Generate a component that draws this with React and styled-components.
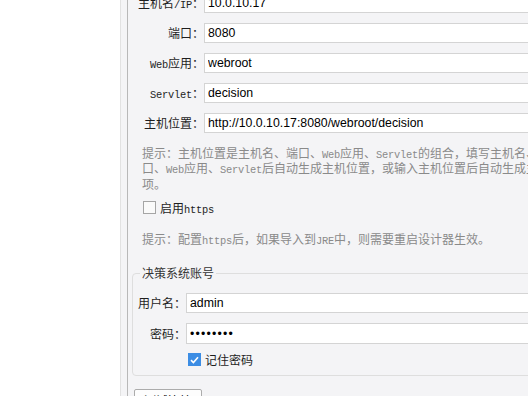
import styled, { createGlobalStyle } from "styled-components";

const GlobalStyle = createGlobalStyle`
  html, body {
    margin: 0;
    padding: 0;
    overflow: hidden;
    background: #fff;
  }
  body {
    font-family: "Noto Sans CJK SC", "Liberation Sans", sans-serif;
  }
`;

const Page = styled.div`
  display: flex;
  width: 528px;
  height: 396px;
  overflow: hidden;
`;

const Sidebar = styled.div`
  width: 120px;
  flex-shrink: 0;
  background: #fff;
  border-right: 1px solid #e2e2e2;
`;

const Gutter = styled.div`
  width: 6px;
  flex-shrink: 0;
  background: #f4f4f6;
`;

const Content = styled.div`
  flex: 1;
  min-width: 0;
  background: #f4f4f6;
  border-left: 1px solid #b8b8b8;
  overflow: hidden;
`;

// the form is scrolled a few pixels down, so the first row is cut off
const Scroll = styled.div`
  width: 640px;
  margin-top: -7px;
`;

const FieldGrid = styled.div`
  display: grid;
  grid-template-columns: ${(p) => p.$label}px 1fr;
  row-gap: 10px;
  align-items: center;
  padding-top: ${(p) => p.$top || 0}px;
`;

const Label = styled.label`
  text-align: right;
  font-size: 12px;
  line-height: 16px;
  color: #1e1e1e;
  white-space: nowrap;
`;

const Mono = styled.span`
  font-family: "Liberation Mono", monospace;
  font-size: 10.4px;
  line-height: 1;
  letter-spacing: -0.25px;
`;

const Input = styled.input`
  box-sizing: border-box;
  width: 100%;
  height: ${(p) => p.$h || 20}px;
  margin: 0;
  padding: 0 3px;
  border: 1px solid #d4d4d4;
  border-radius: 0;
  background: #fff;
  font-family: "Liberation Sans", Arial, sans-serif;
  font-size: 12.3px;
  color: #000;
  outline: none;
  letter-spacing: ${(p) => (p.type === "password" ? "1.2px" : "0")};
`;

const Hint = styled.div`
  margin: ${(p) => p.$top}px 0 0 14px;
  font-size: 12px;
  line-height: 15px;
  color: #8a8a8a;
  white-space: nowrap;
  word-spacing: ${(p) => p.$spread || 0}px;
`;

const CheckRow = styled.div`
  display: flex;
  align-items: center;
  gap: 4px;
  height: 17px;
  margin: ${(p) => p.$margin};
  font-size: 12px;
  line-height: 17px;
  color: #1e1e1e;
`;

const Box = styled.span`
  box-sizing: border-box;
  width: 13px;
  height: 13px;
  display: inline-flex;
  align-items: center;
  justify-content: center;
  border: 1px solid ${(p) => (p.$checked ? "#3c8de4" : "#a5a5a5")};
  background: ${(p) => (p.$checked ? "#3c8de4" : "#fafafa")};
`;

const Group = styled.fieldset`
  margin: 19px 0 0 4px;
  padding: 0 0 7px;
  min-width: 0;
  border: 1px solid #dedede;
  border-radius: 4px;
`;

const Legend = styled.legend`
  margin-left: 7px;
  padding: 0 2px;
  font-size: 12px;
  line-height: 16px;
  color: #333;
`;

const Button = styled.button`
  display: block;
  box-sizing: border-box;
  width: 68px;
  height: 22px;
  margin: 13px 0 0 6px;
  padding: 0;
  border: 1px solid #acacac;
  border-radius: 2px;
  background: #fdfdfd;
  font-family: "Noto Sans CJK SC", sans-serif;
  font-size: 12px;
  color: #000;
`;

const Check = ({ checked, children, margin }) => (
  <CheckRow $margin={margin}>
    <Box $checked={checked}>
      {checked && (
        <svg width="9" height="8" viewBox="0 0 9 8">
          <path d="M1 4.2 L3.4 6.5 L8 1.2" fill="none" stroke="#fff" strokeWidth="1.6" />
        </svg>
      )}
    </Box>
    <span>{children}</span>
  </CheckRow>
);

export default function App() {
  return (
    <>
      <GlobalStyle />
      <Page>
        <Sidebar />
        <Gutter />
        <Content>
          <Scroll>
            <FieldGrid $label={76}>
              <Label>主机名<Mono>/IP</Mono>：</Label>
              <Input readOnly defaultValue="10.0.10.17" />
              <Label>端口：</Label>
              <Input readOnly defaultValue="8080" />
              <Label><Mono>Web</Mono>应用：</Label>
              <Input readOnly defaultValue="webroot" />
              <Label><Mono>Servlet</Mono>：</Label>
              <Input readOnly defaultValue="decision" />
              <Label>主机位置：</Label>
              <Input readOnly defaultValue="http://10.0.10.17:8080/webroot/decision" />
            </FieldGrid>

            <Hint $top={12}>
              提示：主机位置是主机名、端口、<Mono>Web</Mono>应用、<Mono>Servlet</Mono>的组合，填写主机名、端
              <br />
              口、<Mono>Web</Mono>应用、<Mono>Servlet</Mono>后自动生成主机位置，或输入主机位置后自动生成主机名、端口、<Mono>Web</Mono>应用、<Mono>Servlet</Mono>
              <br />
              项。
            </Hint>

            <Check margin="8px 0 0 15px">
              启用<Mono>https</Mono>
            </Check>

            <Hint $top={15}>
              提示：配置<Mono>https</Mono>后，如果导入到<Mono>JRE</Mono>中，则需要重启设计器生效。
            </Hint>

            <Group>
              <Legend>决策系统账号</Legend>
              <FieldGrid $label={53} $top={12}>
                <Label>用户名：</Label>
                <Input readOnly defaultValue="admin" />
                <Label>密码：</Label>
                <Input type="password" readOnly defaultValue="12345678" $h={21} />
                <span />
                <Check checked margin="-3px 0 0 2px">
                  记住密码
                </Check>
              </FieldGrid>
            </Group>

            <Button>测试连接</Button>
          </Scroll>
        </Content>
      </Page>
    </>
  );
}
